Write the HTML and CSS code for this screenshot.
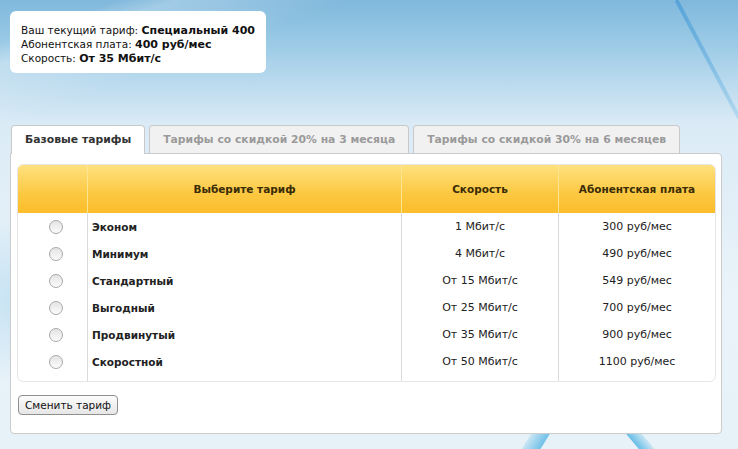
FILE: index.html
```html
<!DOCTYPE html>
<html lang="ru">
<head>
  <meta charset="UTF-8" />
  <title>Смена тарифа</title>
  <link rel="stylesheet" href="styles.css">
</head>
<body>
  <div class="swoosh swoosh-top"></div>
  <div class="swoosh swoosh-bottom-left"></div>
  <div class="swoosh swoosh-bottom-right"></div>

  <div class="page">
    <div class="current-plan">
      Ваш текущий тариф: <b>Специальный 400</b><br>
      Абонентская плата: <b>400 руб/мес</b><br>
      Скорость: <b>От 35 Мбит/с</b>
    </div>

    <div class="tabs">
      <div class="tab active">Базовые тарифы</div>
      <div class="tab">Тарифы со скидкой 20% на 3 месяца</div>
      <div class="tab">Тарифы со скидкой 30% на 6 месяцев</div>
    </div>

    <div class="panel">
      <table class="plans">
        <thead>
          <tr>
            <th class="col-radio"></th>
            <th class="col-name">Выберите тариф</th>
            <th class="col-speed">Скорость</th>
            <th class="col-price">Абонентская плата</th>
          </tr>
        </thead>
        <tbody>
          <tr>
            <td><span class="radio"></span></td>
            <td class="name">Эконом</td>
            <td>1 Мбит/с</td>
            <td>300 руб/мес</td>
          </tr>
          <tr>
            <td><span class="radio"></span></td>
            <td class="name">Минимум</td>
            <td>4 Мбит/с</td>
            <td>490 руб/мес</td>
          </tr>
          <tr>
            <td><span class="radio"></span></td>
            <td class="name">Стандартный</td>
            <td>От 15 Мбит/с</td>
            <td>549 руб/мес</td>
          </tr>
          <tr>
            <td><span class="radio"></span></td>
            <td class="name">Выгодный</td>
            <td>От 25 Мбит/с</td>
            <td>700 руб/мес</td>
          </tr>
          <tr>
            <td><span class="radio"></span></td>
            <td class="name">Продвинутый</td>
            <td>От 35 Мбит/с</td>
            <td>900 руб/мес</td>
          </tr>
          <tr class="last">
            <td><span class="radio"></span></td>
            <td class="name">Скоростной</td>
            <td>От 50 Мбит/с</td>
            <td>1100 руб/мес</td>
          </tr>
        </tbody>
      </table>

      <button class="change-btn">Сменить тариф</button>
    </div>
  </div>
</body>
</html>
```

FILE: styles.css
```css
body {
  margin: 0;
  height: 449px;
  overflow: hidden;
  position: relative;
  font-family: "DejaVu Sans", Verdana, sans-serif;
  font-size: 10.5px;
  color: #111;
  background:
    radial-gradient(ellipse 160px 120px at 30px 300px, rgba(120, 190, 230, 0.35), rgba(120, 190, 230, 0) 70%),
    linear-gradient(160deg, rgba(255, 255, 255, 0) 0, rgba(255, 255, 255, 0) 40px, rgba(255, 255, 255, 0.25) 60px, rgba(255, 255, 255, 0) 120px),
    linear-gradient(to bottom, #80b8dc 0, #9ccbe6 45px, #c2def0 92px, #dbebf6 125px, #eaf3f9 300px, #e6f1f8 449px);
}

/* Decorative background curves */
.swoosh {
  position: absolute;
  border-radius: 3px;
}

.swoosh-top {
  left: 706px;
  top: -8px;
  width: 4px;
  height: 135px;
  transform: rotate(-28deg);
  background: linear-gradient(to bottom, rgba(60, 150, 215, 0.6), rgba(90, 175, 225, 0.25));
}

.swoosh-bottom-left {
  left: 528px;
  top: 424px;
  width: 16px;
  height: 34px;
  transform: rotate(32deg);
  background: linear-gradient(to right, rgba(90, 185, 230, 0.2), rgba(80, 180, 228, 0.8));
}

.swoosh-bottom-right {
  left: 634px;
  top: 424px;
  width: 12px;
  height: 34px;
  transform: rotate(-40deg);
  background: linear-gradient(to right, rgba(80, 180, 228, 0.85), rgba(90, 185, 230, 0.2));
}

.page {
  position: relative;
  padding: 11px 0 0 10px;
}

/* Current plan box */
.current-plan {
  display: inline-block;
  background: #fff;
  border-radius: 6px;
  padding: 12px 11px 8px 11px;
  line-height: 14px;
  margin-bottom: 52px;
  vertical-align: top;
}

.current-plan b {
  font-size: 11px;
  line-height: 1;
}

/* Tabs */
.tabs {
  display: flex;
  gap: 4px;
  padding-left: 1px;
}

.tab {
  padding: 6px 13px 0 13px;
  height: 21px;
  background: #f1f1f1;
  border: 1px solid #c9c9c9;
  border-bottom: none;
  border-radius: 4px 4px 0 0;
  color: #9a9a9a;
  font-weight: bold;
  font-size: 10.8px;
  line-height: 16px;
}

.tab.active {
  background: #fff;
  color: #333;
  height: 22px;
  margin-bottom: -1px;
  position: relative;
}

.panel {
  width: 698px;
  background: #fff;
  border: 1px solid #cbcbcb;
  border-radius: 0 4px 4px 4px;
  padding: 10px 6px 18px 6px;
}

/* Table */
.plans {
  width: 699px;
  border-collapse: separate;
  border-spacing: 0;
  border: 1px solid #e6e6e6;
  border-radius: 6px;
  font-size: 11px;
  margin-bottom: 13px;
}

.plans th {
  height: 48px;
  padding: 0;
  background: linear-gradient(to bottom, #fee17f, #fcc841 60%, #fbbd2b);
  color: #3a2c05;
  font-weight: bold;
  font-size: 10.5px;
  border-left: 1px solid #fde592;
}

.plans th:first-child {
  border-left: none;
  border-top-left-radius: 5px;
}

.plans th:last-child {
  border-top-right-radius: 5px;
}

.col-radio { width: 69px; }
.col-name { width: 313px; }
.col-speed { width: 156px; }

.plans td {
  height: 27px;
  padding: 0;
  text-align: center;
  color: #222;
  border-left: 1px solid #dadada;
}

.plans td:first-child {
  border-left: none;
}

.plans td.name {
  text-align: left;
  padding-left: 4px;
  font-weight: bold;
  font-size: 10.5px;
  color: #222;
}

.plans tr.last td {
  padding-bottom: 6px;
}

.radio {
  display: inline-block;
  width: 12px;
  height: 12px;
  border-radius: 50%;
  border: 1px solid #a8a8a8;
  background: linear-gradient(to bottom, #e4e4e4, #fbfbfb);
  vertical-align: middle;
  margin-left: 6px;
}

.change-btn {
  display: block;
  margin-left: 1px;
  height: 20px;
  padding: 0 6px;
  font-family: "DejaVu Sans", Verdana, sans-serif;
  font-size: 10.5px;
  color: #111;
  background: linear-gradient(to bottom, #fdfdfd, #e6e6e6);
  border: 1px solid #8f8f8f;
  border-radius: 4px;
}
```
